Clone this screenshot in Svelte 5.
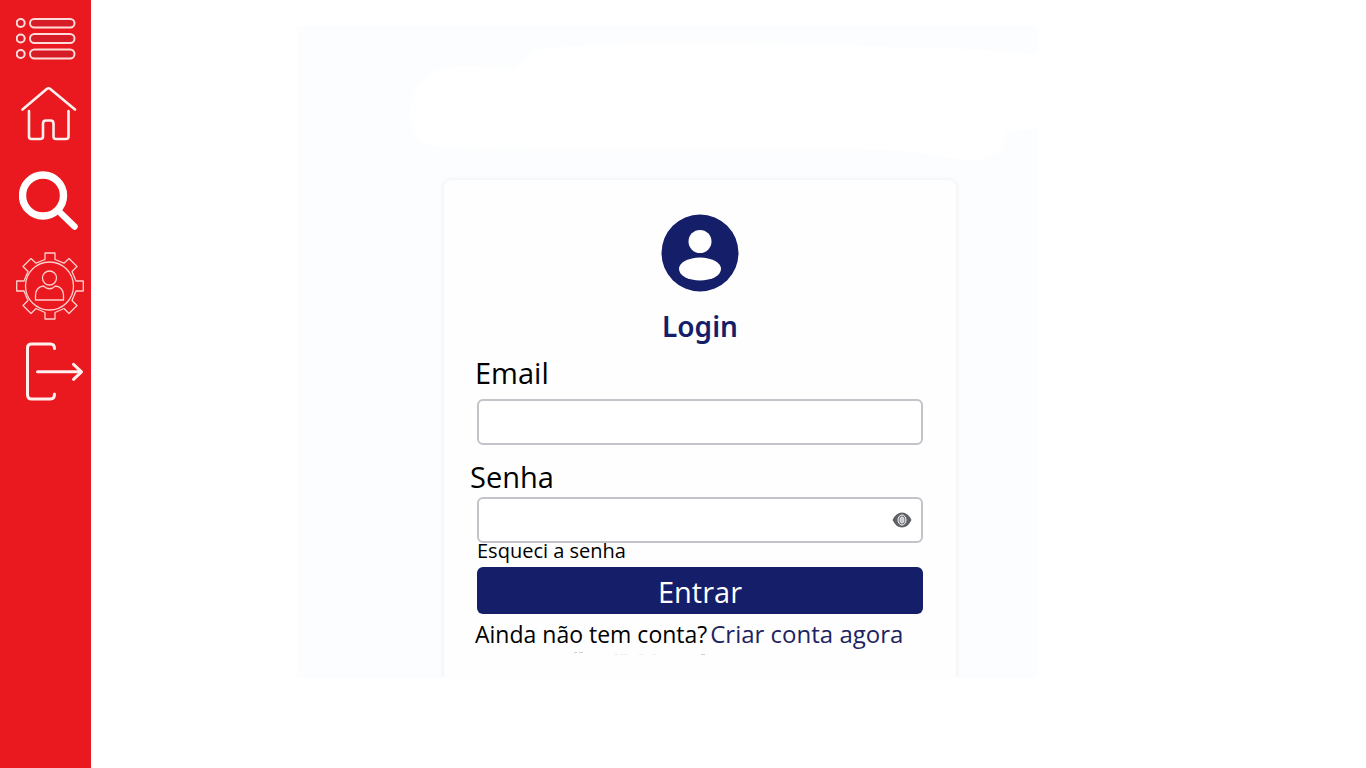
<script>
  let email = $state('');
  let password = $state('');
  let visible = $state(false);
</script>

<div class="page">
  <nav class="sidebar" aria-label="Principal">
    <button class="item menu" type="button" aria-label="Menu">
      <svg width="60" height="42" viewBox="0 0 60 42" fill="#d51c27" stroke="#ffdcda" stroke-width="2">
        <circle cx="4.700" cy="5" r="4" /><rect x="14" y="1" width="44.5" height="8.5" rx="4.2" />
        <circle cx="4.700" cy="20.5" r="4" /><rect x="14" y="16" width="44.5" height="9" rx="4.5" />
        <circle cx="4.700" cy="36" r="4" /><rect x="14" y="31.5" width="44.5" height="9" rx="4.5" />
      </svg>
    </button>
    <a class="item home" href="#inicio" aria-label="Início">
      <svg width="56" height="55" viewBox="0 0 56 55" fill="none" stroke="#fff0ee" stroke-width="2.6" stroke-linecap="round" stroke-linejoin="round">
        <path d="M1.500 23.500 26 2.800Q27.500 1.700 29 2.800L54 23.500" />
        <path d="M8 25V50.500Q8 53 10.500 53H19Q22 53 22 50.500V37.500Q22 34.500 25 34.500H29.500Q32.500 34.500 32.500 37.500V50.500Q32.500 53 35 53H45Q47.500 53 47.500 50.500V25" />
      </svg>
    </a>
    <button class="item search" type="button" aria-label="Pesquisar">
      <svg width="60" height="60" viewBox="0 0 60 60" fill="none" stroke="#fff" stroke-linecap="round">
        <circle cx="24" cy="24.500" r="20.500" stroke-width="7.400" />
        <path d="M39.500 40 55.500 55.500" stroke-width="6.500" />
      </svg>
    </button>
    <a class="item account" href="#conta" aria-label="Configurações da conta">
      <svg width="68" height="68" viewBox="0 0 68 68" fill="none" stroke="#ffd0cd" stroke-width="1.3" stroke-linejoin="round">
        <path d="M29 1H39V7.500L48 11.200 53 6.500 61 14.500 56 19.500 60 29H67.300V39H60L56 48.500 61 53.500 53 61.500 48 56.500 39 60.500V67H29V60.500L20 56.500 15 61.500 7 53.500 12 48.500 8 39H.700V29H8L12 19.500 7 14.500 15 6.500 20 11.200 29 7.500Z" />
        <circle cx="33.500" cy="34" r="24" />
        <circle cx="33.500" cy="26" r="7" />
        <path d="M19.500 48V43Q20 35 27.500 34 33.500 39.500 39.500 34 47 35 47.500 43V48Z" />
      </svg>
    </a>
    <button class="item exit" type="button" aria-label="Sair">
      <svg width="60" height="60" viewBox="0 0 60 60" fill="none" stroke="#fff0ee" stroke-width="3" stroke-linecap="round" stroke-linejoin="round">
        <path d="M30.500 7.500Q30.500 3 26.500 3H7.500Q3.500 3 3.500 7V53.500Q3.500 58 7.500 58H26.500Q30.500 58 30.500 53" />
        <path d="M13.500 30.800H57M49.500 23.300 57.500 30.800 49.500 38.300" />
      </svg>
    </button>
  </nav>

  <main>
    <div class="panel">
      <svg class="cloud" viewBox="0 0 740 154" preserveAspectRatio="none" aria-hidden="true">
        <path fill="#fff" d="M740 28C690 24 650 22 600 21 540 18 490 18 420 17 350 16 300 18 250 22 232 26 224 34 219 43 190 40 158 40 143 42 122 49 113 70 113 92 115 114 128 121 150 122 230 124 500 122 600 124 630 126 650 134 680 134 700 132 709 120 708 107L740 102Z" />
      </svg>
      <form class="card" onsubmit={(e) => e.preventDefault()}>
        <svg class="avatar" width="78" height="78" viewBox="0 0 78 78" aria-hidden="true">
          <circle cx="39" cy="39" r="38.500" fill="#151e68" />
          <circle cx="39" cy="27.500" r="11.500" fill="#fff" />
          <ellipse cx="39" cy="55" rx="21" ry="11.500" fill="#fff" />
        </svg>
        <h1>Login</h1>

        <label class="first" for="email">Email</label>
        <div class="field spaced">
          <input id="email" type="email" bind:value={email} />
        </div>

        <label class="second" for="password">Senha</label>
        <div class="field">
          <input id="password" type={visible ? 'text' : 'password'} bind:value={password} />
          <button class="eye" type="button" aria-label="Mostrar senha" onclick={() => (visible = !visible)}>
            <svg width="20" height="16" viewBox="0 0 20 16">
              <path d="M.500 8Q4 .500 10 .500T19.500 8Q16 15.500 10 15.500T.500 8Z" fill="#606168" />
              <ellipse cx="10" cy="8" rx="4" ry="5" fill="#707178" stroke="#fff" stroke-width="1" />
              <ellipse cx="10" cy="8" rx="2" ry="3" fill="#c4c5c9" stroke="#e8e8ea" stroke-width="1" />
            </svg>
          </button>
        </div>

        <a class="forgot" href="#recuperar">Esqueci a senha</a>
        <button class="submit" type="submit">Entrar</button>
        <p class="signup">
          <span>Ainda não tem conta?</span>
          <a href="#criar">Criar conta agora</a>
        </p>
        <svg class="specks" width="136" height="5" viewBox="0 0 136 5" fill="none" stroke="#cfd0d6" aria-hidden="true">
          <path d="M2 1.500h3m2 0h4m118 2h4" />
          <path d="M42 3.500h4m2 0h7m12 0h4m10 0h3" stroke="#eeeff1" />
        </svg>
      </form>
    </div>
  </main>
</div>

<style>
  :global(body) {
    margin: 0;
    background: #fff;
  }

  .page {
    display: flex;
    min-height: 100vh;
    font-family: 'Open Sans', 'Noto Sans', sans-serif;
    color: #000;
  }

  button {
    border: 0;
    font: inherit;
    cursor: pointer;
  }

  svg {
    display: block;
  }

  a {
    color: inherit;
    text-decoration: none;
  }

  .sidebar {
    display: flex;
    flex-direction: column;
    align-items: flex-start;
    flex: 0 0 91px;
    box-sizing: border-box;
    padding: 18px 0 0 16px;
    background: #e9191f;
  }

  .item {
    padding: 0;
    background: none;
  }

  .home {
    margin: 26px 0 0 5px;
  }

  .search {
    margin: 30px 0 0 3px;
  }

  .account {
    margin-top: 21px;
  }

  .exit {
    margin: 21px 0 0 8px;
  }

  main {
    flex: 1;
    padding: 26px 24px 24px 206px;
  }

  .panel {
    display: flex;
    flex-direction: column;
    box-sizing: border-box;
    max-width: 740px;
    background: #fbfdfe;
    overflow: hidden;
  }

  .cloud {
    width: 100%;
    height: 154px;
  }

  .card {
    display: flex;
    flex-direction: column;
    box-sizing: border-box;
    width: 512px;
    max-width: 100%;
    margin-left: 147px;
    padding: 34px 26px 22px;
    border-radius: 8px 8px 0 0;
    background: #fefefe;
    box-shadow: 0 0 5px #e9edf0;
  }

  .avatar {
    align-self: center;
  }

  h1 {
    margin: 18px 0 11px;
    font-family: 'Noto Sans', 'Open Sans', sans-serif;
    font-size: 28px;
    line-height: 32px;
    font-weight: 600;
    text-align: center;
    color: #151e68;
  }

  label {
    font-size: 29px;
    line-height: 40px;
  }

  .first,
  .signup {
    margin-left: 5px;
  }

  .second {
    margin-top: 12px;
  }

  .field {
    display: flex;
    align-items: center;
    box-sizing: border-box;
    height: 46px;
    margin: 0 7px;
    border: 2px solid #c3c3c9;
    border-radius: 6px;
    background: #fff;
  }

  .field:focus-within {
    border-color: #151e68;
  }

  .spaced {
    margin-top: 6px;
  }

  input {
    flex: 1;
    min-width: 0;
    padding: 0 12px;
    border: 0;
    outline: 0;
    background: none;
    font: inherit;
    font-size: 20px;
  }

  .eye {
    padding: 0 9px;
    background: none;
  }

  .forgot {
    align-self: flex-start;
    margin-left: 7px;
    font-size: 20px;
    line-height: 16px;
  }

  .submit {
    height: 47px;
    margin: 8px 7px 0;
    padding: 3px 0 0;
    border-radius: 6px;
    background: #151e68;
    color: #fff;
    font-size: 29px;
    line-height: 40px;
  }

  .signup {
    display: flex;
    align-items: center;
    gap: 3px;
    margin-top: 4px;
    margin-bottom: 0;
    font-size: 23px;
    line-height: 32px;
    white-space: nowrap;
  }

  .signup a {
    color: #1d2461;
    font-size: 24px;
  }

  .specks {
    margin: 1px 0 0 102px;
  }
</style>
